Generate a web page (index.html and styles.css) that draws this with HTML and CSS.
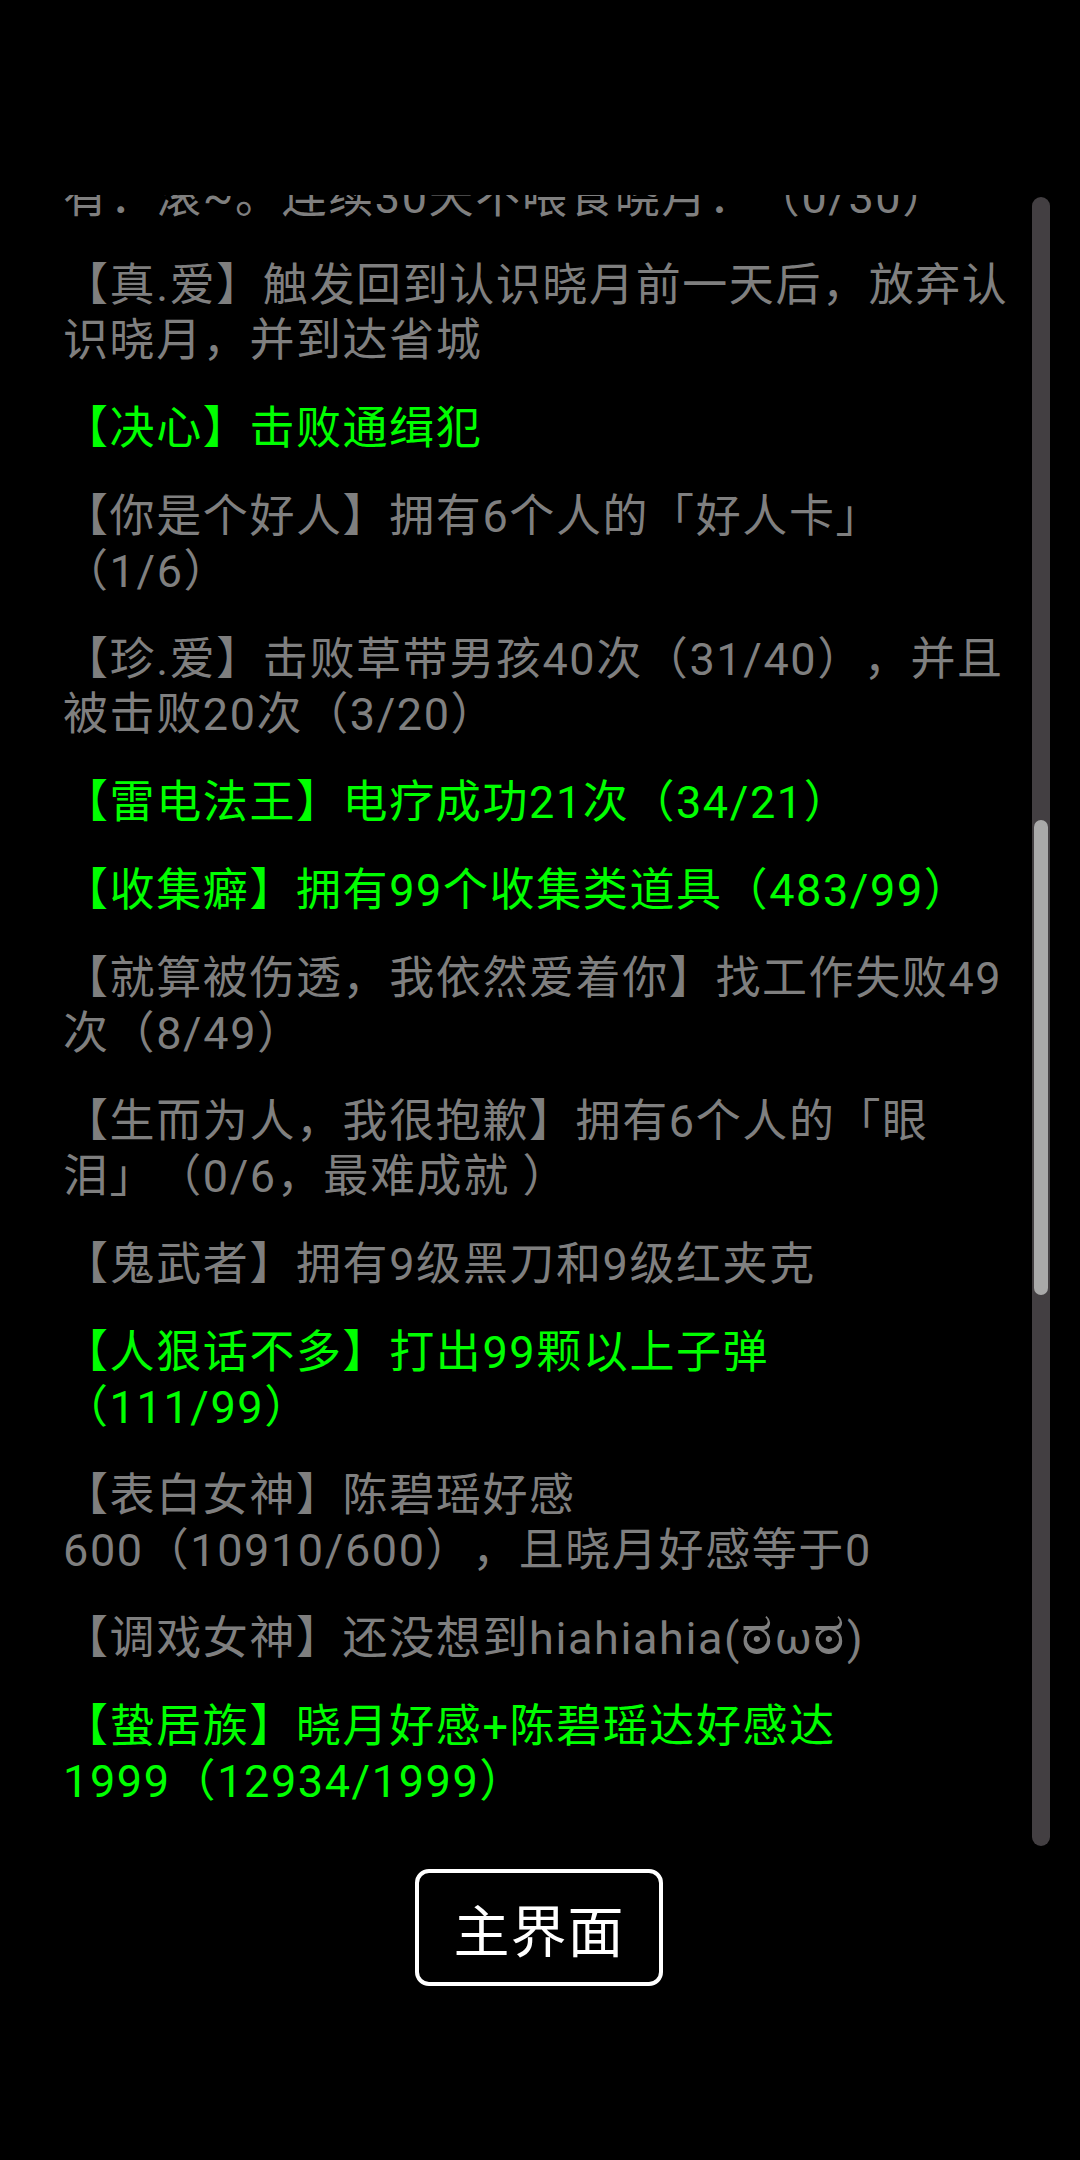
FILE: index.html
```html
<!DOCTYPE html>
<html lang="zh-CN">
<head>
<meta charset="utf-8">
<title>成就</title>
<link rel="stylesheet" href="styles.css">
</head>
<body>
<div class="screen">
  <div class="scroller">
    <div class="list">
      <div class="items">
        <p class="item gray">有：滚~。连续30天不喂食晓月：（0/30）</p>
        <p class="item gray">【真.爱】触发回到认识晓月前一天后，放弃认<br>识晓月，并到达省城</p>
        <p class="item green">【决心】击败通缉犯</p>
        <p class="item gray">【你是个好人】拥有6个人的「好人卡」<br>（1/6）</p>
        <p class="item gray">【珍.爱】击败草带男孩40次（31/40），并且<br>被击败20次（3/20）</p>
        <p class="item green">【雷电法王】电疗成功21次（34/21）</p>
        <p class="item green">【收集癖】拥有99个收集类道具（483/99）</p>
        <p class="item gray">【就算被伤透，我依然爱着你】找工作失败49<br>次（8/49）</p>
        <p class="item gray">【生而为人，我很抱歉】拥有6个人的「眼<br>泪」（0/6，最难成就 ）</p>
        <p class="item gray">【鬼武者】拥有9级黑刀和9级红夹克</p>
        <p class="item green">【人狠话不多】打出99颗以上子弹<br>（111/99）</p>
        <p class="item gray">【表白女神】陈碧瑶好感<br>600（10910/600），且晓月好感等于0</p>
        <p class="item gray">【调戏女神】还没想到hiahiahia(<span class="kn">ಠ</span>ω<span class="kn">ಠ</span>)</p>
        <p class="item green">【蛰居族】晓月好感+陈碧瑶达好感达<br>1999（12934/1999）</p>
      </div>
    </div>
    <div class="track"><div class="thumb"></div></div>
  </div>
  <div class="actions">
    <button class="main-btn" type="button">主界面</button>
  </div>
</div>
</body>
</html>
```
FILE: styles.css
```css
html, body {
  margin: 0;
  padding: 0;
  background: #000;
}

body {
  width: 1080px;
  height: 2160px;
  overflow: hidden;
  font-family: Roboto, "Noto Sans CJK SC", "Noto Sans", sans-serif;
  text-spacing-trim: space-all;
}

.screen {
  padding-top: 195px;
}

.scroller {
  display: flex;
  height: 1651px;
}

.list {
  flex: 1;
  overflow: hidden;
  padding-left: 63px;
}

.items {
  margin-top: -25px;
}

.item {
  margin: 0 0 33px 0;
  font-size: 45px;
  line-height: 55px;
  letter-spacing: 1.6px;
  white-space: nowrap;
  text-spacing-trim: space-all;
}

.kn {
  font-size: 60px;
  line-height: 0;
}

.gray {
  color: #7f7f7f;
}

.green {
  color: #00ff00;
}

.track {
  width: 18px;
  margin-top: 2px;
  margin-right: 30px;
  box-sizing: border-box;
  padding: 0 2px;
  background: #433f42;
  border-radius: 9px;
  display: flex;
  flex-direction: column;
}

.thumb {
  margin-top: 623px;
  height: 475px;
  background: #a9a9a9;
  border-radius: 7px;
}

.actions {
  display: flex;
  justify-content: center;
  padding-top: 23px;
}

.main-btn {
  box-sizing: border-box;
  width: 248px;
  height: 117px;
  margin-right: 2px;
  background: #000;
  border: 4px solid #fff;
  border-radius: 14px;
  color: #fff;
  font-family: "Noto Sans CJK SC", sans-serif;
  font-size: 56px;
  letter-spacing: 1px;
  line-height: 1;
  padding: 0;
}
```
